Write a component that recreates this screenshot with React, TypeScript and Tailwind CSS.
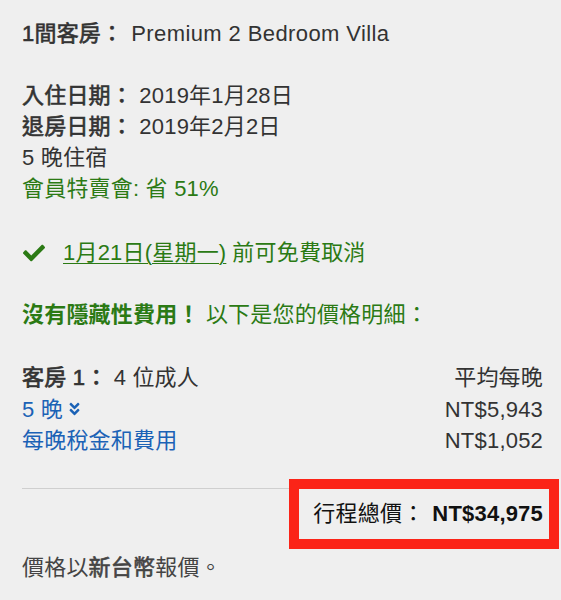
import { FaCheck, FaAngleDoubleDown } from "react-icons/fa";

const font = {
    fontFamily: '"Liberation Sans", "Noto Sans CJK TC", sans-serif',
};

const PriceRow = ({
    left,
    right,
}: {
    left: React.ReactNode;
    right: string;
}) => (
    <div className="flex justify-between items-center h-[31.5px]">
        <div>{left}</div>
        <div className="text-[#333]">{right}</div>
    </div>
);

export default function App() {
    return (
        <div
            style={font}
            className="min-h-[600px] w-[561px] bg-[#efefef] text-[#333] text-[22px] tracking-[0.2px] leading-[31px] pl-[22px] pr-[18px] pt-[18px] overflow-hidden"
        >
            <div>
                <span className="[-webkit-text-stroke:0.6px_currentColor]">1間客房：</span>
                <span className="ml-[8px] tracking-[0.4px]">Premium 2 Bedroom Villa</span>
            </div>

            <div className="mt-[31px]">
                <div>
                    <span className="[-webkit-text-stroke:0.6px_currentColor]">入住日期：</span>{" "}
                    2019年1月28日
                </div>
                <div>
                    <span className="[-webkit-text-stroke:0.6px_currentColor]">退房日期：</span>{" "}
                    2019年2月2日
                </div>
                <div>5 晚住宿</div>
                <div className="text-[#2b7a14]">會員特賣會: 省 51%</div>
            </div>

            <div className="mt-[33px] flex items-center text-[#2b7a14]">
                <FaCheck className="w-[24px] h-[22px] mr-[17px]" />
                <span className="underline underline-offset-[3px] decoration-1">
                    1月21日(星期一)
                </span>
                <span className="ml-[6px]">前可免費取消</span>
            </div>

            <div className="mt-[31px] text-[#2b7a14]">
                <span className="font-bold">沒有隱藏性費用！</span>{" "}
                以下是您的價格明細：
            </div>

            <div className="mt-[32px]">
                <PriceRow
                    left={
                        <>
                            <span className="[-webkit-text-stroke:0.7px_currentColor]">客房 1：</span> 4 位成人
                        </>
                    }
                    right="平均每晚"
                />
                <PriceRow
                    left={
                        <span className="text-[#1b62b6] inline-flex items-center">
                            5 晚
                            <FaAngleDoubleDown className="ml-[5px] w-[13px] h-[16px]" />
                        </span>
                    }
                    right="NT$5,943"
                />
                <PriceRow
                    left={<span className="text-[#1b62b6]">每晚稅金和費用</span>}
                    right="NT$1,052"
                />
            </div>

            <div className="mt-[31px] border-t border-[#cfcfcf]" />

            <div className="flex justify-end -mt-[10px] -mr-[16px]">
                <div className="relative z-10 w-[270px] h-[70px] border-[10px] border-[#fb2418] bg-[#efefef] flex items-center justify-end pr-[6px] text-[#111]">
                    <span>行程總價：</span>
                    <span className="ml-[8px] font-bold">NT$34,975</span>
                </div>
            </div>

            <div className="mt-[3px] text-[#444]">
                價格以<span className="[-webkit-text-stroke:0.6px_currentColor]">新台幣</span>報價。
            </div>
        </div>
    );
}
